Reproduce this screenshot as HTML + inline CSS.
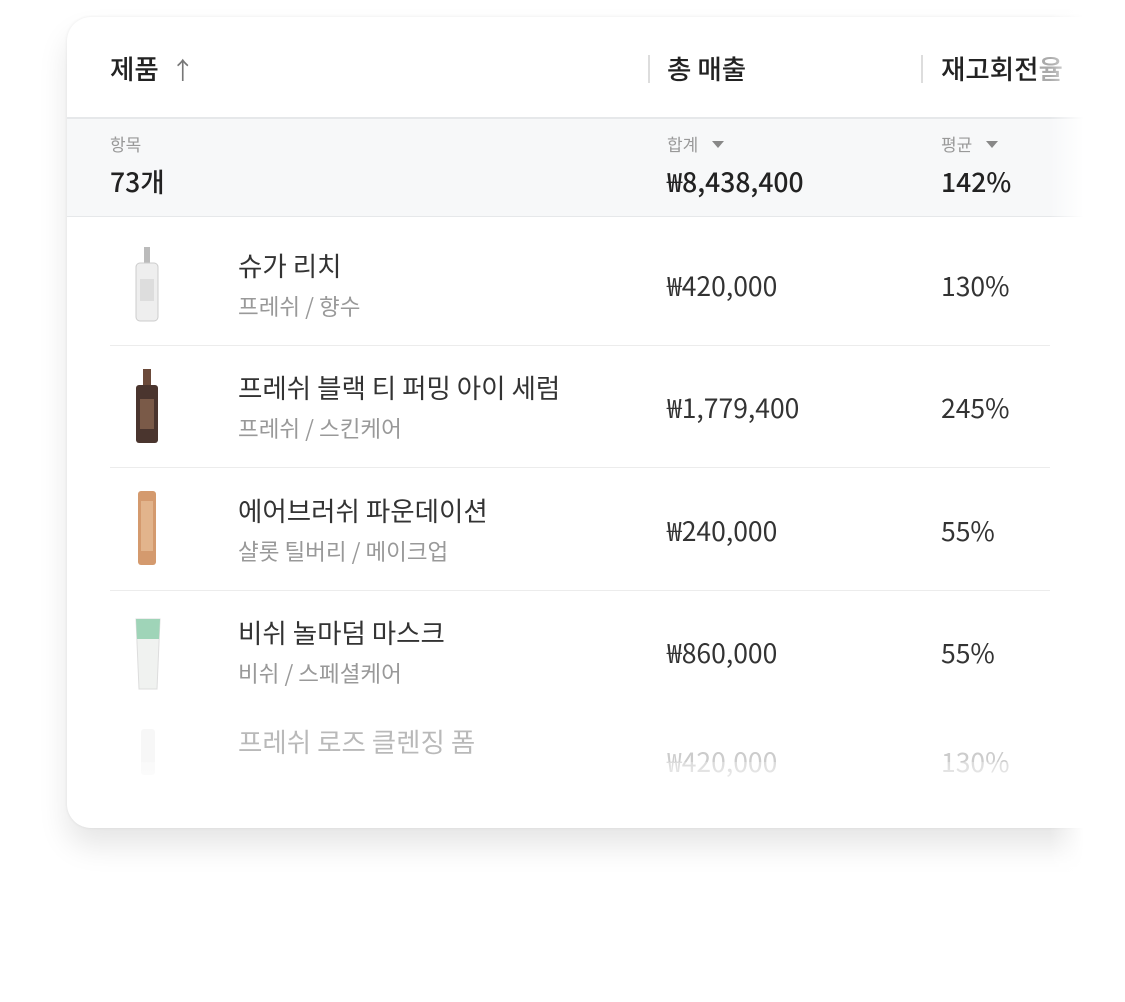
<!DOCTYPE html>
<html><head><meta charset="utf-8"><style>
*{margin:0;padding:0;box-sizing:border-box}
body{width:1125px;height:1002px;background:#fff;font-family:"Noto Sans CJK KR","Liberation Sans",sans-serif;position:relative;overflow:hidden;color:#222}
.card{position:absolute;left:67px;top:17px;width:1040px;height:811px;background:#fff;border-radius:24px 0 0 24px;box-shadow:0 18px 30px rgba(0,0,0,0.10),0 0 3px rgba(0,0,0,0.08);overflow:hidden}
.fade{position:absolute;left:1050px;top:0;width:75px;height:1002px;background:linear-gradient(to right,rgba(255,255,255,0),#fff 45%)}
.t{position:absolute;white-space:nowrap;line-height:1.2}
.h{font-size:26.5px;font-weight:500;color:#222;top:35px}
.sum{position:absolute;left:0;top:100px;width:1040px;height:100px;background:#f7f8f9;border-top:2px solid #e6e8ea;border-bottom:1px solid #e6e8ea}
.lab{font-size:17px;color:#999}
.val{font-size:26.5px;color:#222;font-weight:500}
.name{font-size:26.5px;color:#333}
.sub{font-size:22.5px;color:#999}
.num{font-size:26.5px;color:#333}
.sep{position:absolute;left:43px;width:940px;height:1px;background:#ececec}
.div{position:absolute;top:38px;width:2px;height:28px;background:#ddd}
.tri{display:inline-block;width:0;height:0;border-left:6px solid transparent;border-right:6px solid transparent;border-top:7px solid #888;margin-left:14px;vertical-align:3px}
</style></head><body>
<div class="card">
  <div class="t h" style="left:43px">제품 <span style="font-weight:400;color:#777;margin-left:6px;font-size:24px">↑</span></div>
  <div class="div" style="left:581px"></div>
  <div class="t h" style="left:600px">총 매출</div>
  <div class="div" style="left:854px"></div>
  <div class="t h" style="left:874px">재고회전<span style="color:#aaa">율</span></div>
  <div class="sum">
    <div class="t lab" style="left:43px;top:15px">항목</div>
    <div class="t val" style="left:43px;top:46px">73개</div>
    <div class="t lab" style="left:600px;top:15px">합계<span class="tri"></span></div>
    <div class="t val" style="left:600px;top:46px">₩8,438,400</div>
    <div class="t lab" style="left:874px;top:15px">평균<span class="tri"></span></div>
    <div class="t val" style="left:874px;top:46px">142%</div>
  </div>

  <svg style="position:absolute;left:66px;top:230px" width="30" height="76"><rect x="11" y="0" width="6" height="16" fill="#bbb"/><rect x="3" y="16" width="22" height="58" rx="4" fill="#eee" stroke="#ccc"/><rect x="7" y="32" width="14" height="22" fill="#ddd"/></svg>
  <div class="t name" style="left:171px;top:232px">슈가 리치</div>
  <div class="t sub" style="left:171px;top:276px">프레쉬 / 향수</div>
  <div class="t num" style="left:600px;top:252px">₩420,000</div>
  <div class="t num" style="left:874px;top:252px">130%</div>
  <div class="sep" style="top:328px"></div>

  <svg style="position:absolute;left:66px;top:352px" width="30" height="76"><rect x="10" y="0" width="8" height="16" fill="#6b4a3a"/><rect x="3" y="16" width="22" height="58" rx="3" fill="#4a352e"/><rect x="7" y="30" width="14" height="30" fill="#7a5a48"/></svg>
  <div class="t name" style="left:171px;top:354px">프레쉬 블랙 티 퍼밍 아이 세럼</div>
  <div class="t sub" style="left:171px;top:398px">프레쉬 / 스킨케어</div>
  <div class="t num" style="left:600px;top:374px">₩1,779,400</div>
  <div class="t num" style="left:874px;top:374px">245%</div>
  <div class="sep" style="top:450px"></div>

  <svg style="position:absolute;left:66px;top:474px" width="30" height="76"><rect x="5" y="0" width="18" height="74" rx="3" fill="#d49a6e"/><rect x="8" y="10" width="12" height="50" fill="#e2b48c"/></svg>
  <div class="t name" style="left:171px;top:477px">에어브러쉬 파운데이션</div>
  <div class="t sub" style="left:171px;top:521px">샬롯 틸버리 / 메이크업</div>
  <div class="t num" style="left:600px;top:497px">₩240,000</div>
  <div class="t num" style="left:874px;top:497px">55%</div>
  <div class="sep" style="top:573px"></div>

  <svg style="position:absolute;left:66px;top:600px" width="30" height="76"><path d="M3 2 H27 L24 72 H6 Z" fill="#f0f2f0" stroke="#ddd"/><path d="M3 2 H27 L26 22 H4 Z" fill="#9fd4b8"/></svg>
  <div class="t name" style="left:171px;top:599px">비쉬 놀마덤 마스크</div>
  <div class="t sub" style="left:171px;top:643px">비쉬 / 스페셜케어</div>
  <div class="t num" style="left:600px;top:619px">₩860,000</div>
  <div class="t num" style="left:874px;top:619px">55%</div>

  <div style="opacity:0.45">
    <svg style="position:absolute;left:66px;top:712px" width="30" height="50"><rect x="8" y="0" width="14" height="46" rx="3" fill="#eee"/></svg>
    <div class="t name" style="left:171px;top:708px;color:#666">프레쉬 로즈 클렌징 폼</div>
  </div>
  <div class="t num" style="left:600px;top:728px;color:#ccc">₩420,000</div>
  <div class="t num" style="left:874px;top:728px;color:#ccc">130%</div>
  <div style="position:absolute;left:0;top:745px;width:1040px;height:40px;background:linear-gradient(rgba(255,255,255,0.3),#fff)"></div>
</div>
<div class="fade"></div>
</body></html>
